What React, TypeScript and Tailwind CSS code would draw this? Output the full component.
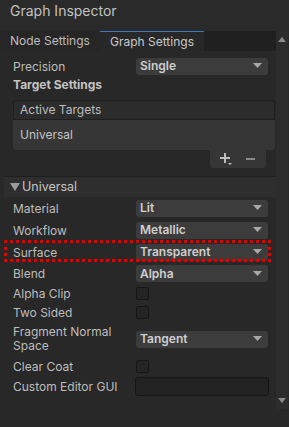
import React from 'react';

const Dropdown: React.FC<{ value: string }> = ({ value }) => (
  <div className="flex h-[17px] w-[132px] items-center justify-between rounded-[3px] bg-[#3c3c3c] pl-[4px] pr-[6px] text-[12px] font-semibold leading-none text-[#cfcfcf]">
    <span>{value}</span>
    <svg width="9" height="6" viewBox="0 0 9 6"><path d="M0 0h9L4.5 5z" fill="#a8a8a8" /></svg>
  </div>
);

const Checkbox: React.FC = () => (
  <div className="h-[13px] w-[13px] rounded-[2px] border border-[#151515] bg-[#242424]" />
);

const Row: React.FC<{ label: string; children: React.ReactNode; h: string }> = ({ label, children, h }) => (
  <div className={`flex items-center ${h}`}>
    <div className="w-[136px] pl-[13px] text-[12px] leading-[15px] text-[#bdbdbd]">{label}</div>
    {children}
  </div>
);

const App: React.FC = () => {
  return (
    <div className="h-[427px] w-[289px] overflow-hidden bg-[#282828]" style={{ fontFamily: 'Inter, "Noto Sans", sans-serif' }}>
      <div className="h-[31px] bg-[#2a2a2a] pl-[10px] text-[14px] leading-[22px] text-[#c2c2c2]">Graph Inspector</div>

      <div className="flex">
        <div className="w-[276px]">
          <div className="flex h-[20px] bg-[#202020] text-[12px] leading-none text-[#bdbdbd]">
            <div className="flex w-[100px] items-center bg-[#262626] pl-[10px]">Node Settings</div>
            <div className="flex w-[104px] items-center border-t border-[#3a78c2] bg-[#282828] pl-[10px] text-[#c8c8c8]">Graph Settings</div>
          </div>

          <div className="mt-[6px]">
            <Row label="Precision" h="h-[18px]"><Dropdown value="Single" /></Row>
          </div>
          <div className="mt-[1px] h-[18px] pl-[13px] text-[12px] font-bold leading-[18px] text-[#c4c4c4]">Target Settings</div>

          <div className="ml-[13px] mt-[6px] w-[262px]">
            <div className="flex h-[20px] items-center rounded-t-[3px] border border-[#1e1e1e] bg-[#2c2c2c] pl-[6px] text-[12px] leading-none text-[#bdbdbd]">Active Targets</div>
            <div className="flex h-[30px] items-center rounded-b-[3px] bg-[#363636] pl-[7px] text-[12px] leading-none text-[#c4c4c4]">Universal</div>
            <div className="ml-[197px] flex h-[18px] w-[56px] items-center rounded-b-[3px] bg-[#363636] pl-[10px]">
              <svg width="14" height="12" viewBox="0 0 14 12">
                <path d="M4 0h2v4h4v2H6v4H4V6H0V4h4z" fill="#bdbdbd" />
                <path d="M8 10h4l-2 2z" fill="#bdbdbd" />
              </svg>
              <svg className="ml-[12px]" width="9" height="2" viewBox="0 0 9 2"><path d="M0 0h9v2H0z" fill="#8a8a8a" /></svg>
            </div>
          </div>

          <div className="ml-[4px] mt-[8px] flex h-[21px] items-center border-t border-[#1e1e1e] bg-[#2e2e2e] pl-[6px] text-[12.5px] leading-none text-[#c4c4c4]">
            <svg className="mr-[2px]" width="10" height="8" viewBox="0 0 10 8"><path d="M0 0h10L5 8z" fill="#9a9a9a" /></svg>
            Universal
          </div>

          <div>
            <Row label="Material" h="h-[22px]"><Dropdown value="Lit" /></Row>
            <Row label="Workflow" h="h-[22px]"><Dropdown value="Metallic" /></Row>
            <div className="relative">
              <div className="pointer-events-none absolute left-[4px] -top-[1px] h-[22px] w-[267px] border-[3px] border-dotted border-[#e00000]" />
              <Row label="Surface" h="h-[22px]"><Dropdown value="Transparent" /></Row>
            </div>
            <Row label="Blend" h="h-[21px]"><Dropdown value="Alpha" /></Row>
            <Row label="Alpha Clip" h="h-[19px]"><Checkbox /></Row>
            <Row label="Two Sided" h="h-[19px]"><Checkbox /></Row>
            <div className="flex h-[34px] items-center">
              <div className="w-[136px] pl-[13px] text-[12px] leading-[14px] text-[#bdbdbd]">Fragment Normal<br />Space</div>
              <Dropdown value="Tangent" />
            </div>
            <Row label="Clear Coat" h="h-[20px]"><Checkbox /></Row>
            <Row label="Custom Editor GUI" h="h-[21px]">
              <div className="-ml-[1px] h-[19px] w-[134px] rounded-[3px] border border-[#141414] bg-[#222222]" />
            </Row>
          </div>
        </div>

        <div className="flex h-[378px] w-[12px] flex-col items-center justify-between bg-[#2c2c2c] pb-[6px] pt-[6px]">
          <svg width="8" height="5" viewBox="0 0 8 5"><path d="M0 5h8L4 0z" fill="#8a8a8a" /></svg>
          <svg width="8" height="5" viewBox="0 0 8 5"><path d="M0 0h8L4 5z" fill="#8a8a8a" /></svg>
        </div>
      </div>
    </div>
  );
};

export default App;
